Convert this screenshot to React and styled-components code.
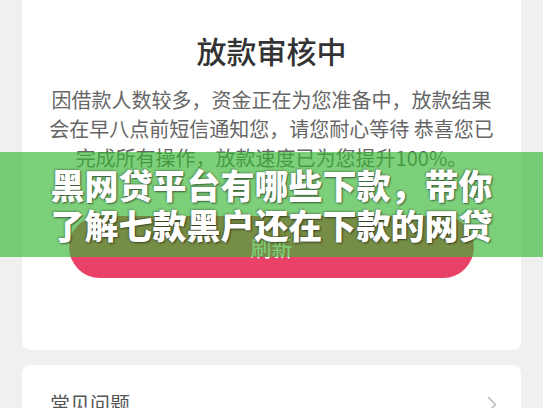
import React from "react"
import styled, { createGlobalStyle } from "styled-components"

const GlobalStyle = createGlobalStyle`
  html, body {
    margin: 0;
    padding: 0;
    background: #f0f0f0;
    font-family: "Noto Sans CJK SC", "Noto Sans", sans-serif;
    overflow: hidden;
  }
`

const Page = styled.div`
  position: relative;
  width: 543px;
  height: 408px;
  padding: 0 22px;
  box-sizing: border-box;
  overflow: hidden;
`

const Card = styled.div`
  background: #fff;
  border-radius: 8px;
  margin-top: ${(p) => p.$gap || 0}px;
`

const StatusCard = styled(Card)`
  margin-top: -12px;
  padding: 42px 0 72px;
  display: flex;
  flex-direction: column;
  align-items: center;
`

const Title = styled.h1`
  margin: 0;
  font-size: 30px;
  line-height: 40px;
  font-weight: 500;
  color: #333;
`

const Desc = styled.p`
  margin: 15px 0 0;
  width: 452px;
  font-size: 20px;
  line-height: 29px;
  color: #666;
  text-align: center;
`

const RefreshButton = styled.button`
  margin-top: 44px;
  width: 405px;
  height: 62px;
  border: 0;
  border-radius: 31px;
  background: #ea4169;
  color: #fff;
  font-family: inherit;
  font-size: 21px;
  cursor: pointer;
`

const FaqRow = styled.div`
  display: flex;
  align-items: center;
  justify-content: space-between;
  padding: 25px 24px 30px 28px;
  font-size: 20px;
  line-height: 28px;
  color: #555;
`

const Banner = styled.div`
  position: absolute;
  left: 0;
  right: 0;
  top: 152px;
  height: 105px;
  background: rgba(55, 183, 51, 0.65);
  display: flex;
  align-items: center;
  justify-content: center;
`

const BannerText = styled.div`
  width: 450px;
  text-align: center;
  color: #fff;
  font-size: 34px;
  line-height: 40px;
  font-weight: 900;
  text-shadow: 1px 1px 2px rgba(0, 0, 0, 0.55), -1px -1px 2px rgba(0, 0, 0, 0.25);
`

const Chevron = () => (
  <svg width="10" height="17" viewBox="0 0 10 17" fill="none">
    <path d="M1.5 1.5L8.5 8.5L1.5 15.5" stroke="#bdbdbd" strokeWidth="1.6" strokeLinecap="round" strokeLinejoin="round" />
  </svg>
)

export default function App() {
  return (
    <>
      <GlobalStyle />
      <Page>
        <StatusCard>
          <Title>放款审核中</Title>
          <Desc>因借款人数较多，资金正在为您准备中，放款结果会在早八点前短信通知您，请您耐心等待 恭喜您已完成所有操作，放款速度已为您提升100%。</Desc>
          <RefreshButton>刷新</RefreshButton>
        </StatusCard>
        <Card $gap={15}>
          <FaqRow>
            <span>常见问题</span>
            <Chevron />
          </FaqRow>
        </Card>
        <Banner>
          <BannerText>黑网贷平台有哪些下款，带你了解七款黑户还在下款的网贷</BannerText>
        </Banner>
      </Page>
    </>
  )
}
